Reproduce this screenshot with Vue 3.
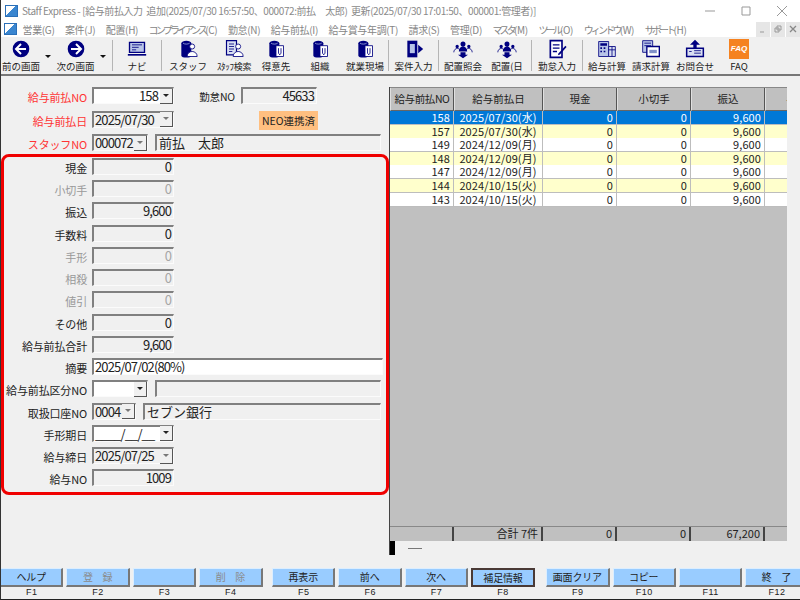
<script setup>
const NAVY = '#000080'
const cyl = { d: 'M4 5c0-4 12-4 12 0v15c0 3-12 3-12 0z', fill: NAVY }
const cylTop = { d: 'M6 5c2 1.5 6 1.5 8 0', stroke: '#9aa6d8' }
const bookPage = { d: 'M12 8h9v13h-9z', fill: '#fff', stroke: NAVY }
const bookLine = { d: 'M15 11v6M18 11v6M15 17l1.5 2 1.5-2', stroke: NAVY }
const person = [
  { d: 'M14 9a3 3 0 1 1 6 0a3 3 0 1 1-6 0z', fill: '#fff', stroke: NAVY },
  { d: 'M11 21c0-8 12-8 12 0z', fill: '#fff', stroke: NAVY }
]
const group = [
  { d: 'M9 6a3 3 0 1 1 6 0a3 3 0 1 1-6 0zM7 15c0-8 10-8 10 0z', fill: NAVY },
  { d: 'M3 9a2 2 0 1 1 4 0a2 2 0 1 1-4 0zM17 9a2 2 0 1 1 4 0a2 2 0 1 1-4 0z', fill: NAVY },
  { d: 'M1 16c0-5 6-6 7-3M23 16c0-5-6-6-7-3', stroke: NAVY },
  { d: 'M9 16h6v3h3l-6 4-6-4h3z', fill: NAVY }
]

const icons = {
  back: [
    { d: 'M2 12a10 10 0 1 1 20 0a10 10 0 1 1-20 0z', fill: NAVY },
    { d: 'M12 6l-6 6 6 6M6 12h12', stroke: '#fff', width: 2.4 }
  ],
  forward: [
    { d: 'M2 12a10 10 0 1 1 20 0a10 10 0 1 1-20 0z', fill: NAVY },
    { d: 'M12 6l6 6-6 6M18 12H6', stroke: '#fff', width: 2.4 }
  ],
  navi: [
    { d: 'M3 4h18v12H3z', fill: '#b8c4e8', stroke: NAVY, width: 1.6 },
    { d: 'M6 7h12M6 10h8M6 13h5', stroke: NAVY },
    { d: 'M1 18h22v2H1z', fill: NAVY }
  ],
  staff: [cyl, cylTop, ...person],
  staffSearch: [
    { d: 'M3 2h12v17H3z', fill: '#d8def2', stroke: NAVY, width: 1.4 },
    { d: 'M6 6h6M6 9h6M6 12h6M6 15h4', stroke: NAVY },
    ...person
  ],
  book: [cyl, cylTop, bookPage, bookLine],
  entry: [
    { d: 'M4 2h12v20H4z', fill: NAVY },
    { d: 'M7 6h6v11H7z', fill: '#b8c4e8' },
    { d: 'M23 12l-6-5v10z', fill: NAVY }
  ],
  assign: group,
  attendance: [
    { d: 'M4 2h14v20H4z', fill: '#fff', stroke: NAVY, width: 2 },
    { d: 'M7 7h8M7 11h8M7 15h5', stroke: NAVY, width: 1.6 },
    { d: 'M14 17l8-9 1.5 1.5-8 9-2.5 1z', fill: NAVY }
  ],
  salary: [
    { d: 'M2 3h12v18H2z', fill: '#b8c4e8', stroke: NAVY },
    { d: 'M4 5h8v3H4zM4 10h2v2H4zM8 10h2v2H8zM4 14h2v2H4zM8 14h2v2H8z', fill: NAVY },
    { d: 'M14 9h8v12h-8z', fill: '#d8def2', stroke: NAVY },
    { d: 'M14 13h8M18 9v12', stroke: NAVY }
  ],
  billing: [
    { d: 'M2 2h12v14H2z', fill: '#b8c4e8', stroke: NAVY },
    { d: 'M4 5h8M4 8h8', stroke: NAVY },
    { d: 'M7 9h15v12H7z', fill: '#fff', stroke: NAVY, width: 1.6 },
    { d: 'M10 13h9v4h-9z', fill: '#8090c8' }
  ],
  contact: [
    { d: 'M12 1l6 6h-4v4h-4V7H6z', fill: NAVY },
    { d: 'M2 11h20v10H2z', fill: '#d8def2', stroke: NAVY, width: 1.8 },
    { d: 'M5 15h3M11 14h8M11 17h8', stroke: NAVY }
  ]
}

// 区切り線は sep、ドロップダウン付きは drop
const tools = [
  { label: '前の画面', icon: 'back', w: 54, drop: true },
  { label: '次の画面', icon: 'forward', w: 55, drop: true },
  { sep: true },
  { label: 'ナビ', icon: 'navi', w: 44 },
  { sep: true },
  { label: 'スタッフ', icon: 'staff', w: 48 },
  { label: 'ｽﾀｯﾌ検索', icon: 'staffSearch', w: 44, small: true },
  { label: '得意先', icon: 'book', w: 40 },
  { label: '組織', icon: 'book', w: 48 },
  { label: '就業現場', icon: 'book', w: 42 },
  { sep: true },
  { label: '案件入力', icon: 'entry', w: 45 },
  { sep: true },
  { label: '配置照会', icon: 'assign', w: 44 },
  { label: '配置(日', icon: 'assign', w: 44 },
  { sep: true },
  { label: '勤怠入力', icon: 'attendance', w: 46 },
  { sep: true },
  { label: '給与計算', icon: 'salary', w: 44 },
  { label: '請求計算', icon: 'billing', w: 44 },
  { label: 'お問合せ', icon: 'contact', w: 44 },
  { label: 'FAQ', faq: true, w: 44 }
]

const menus = [
  { label: '営業', key: '(G)' },
  { label: '案件', key: '(J)' },
  { label: '配置', key: '(H)' },
  { label: 'コンプライアンス', key: '(C)', kana: true },
  { label: '勤怠', key: '(N)' },
  { label: '給与前払', key: '(I)' },
  { label: '給与賞与年調', key: '(T)' },
  { label: '請求', key: '(S)' },
  { label: '管理', key: '(D)' },
  { label: 'マスタ', key: '(M)', kana: true },
  { label: 'ツール', key: '(O)', kana: true },
  { label: 'ウィンドウ', key: '(W)', kana: true },
  { label: 'サポート', key: '(H)', kana: true }
]

const amounts = [
  { label: '現金', value: '0' },
  { label: '小切手', value: '0', off: true },
  { label: '振込', value: '9,600' },
  { label: '手数料', value: '0' },
  { label: '手形', value: '0', off: true },
  { label: '相殺', value: '0', off: true },
  { label: '値引', value: '0', off: true },
  { label: 'その他', value: '0' },
  { label: '給与前払合計', value: '9,600' }
]

const rows = [
  ['158', '2025/07/30(水)'],
  ['157', '2025/07/30(水)'],
  ['149', '2024/12/09(月)'],
  ['148', '2024/12/09(月)'],
  ['147', '2024/12/09(月)'],
  ['144', '2024/10/15(火)'],
  ['143', '2024/10/15(火)']
]

const fkeys = [
  { key: 'F1', label: 'ヘルプ' },
  { key: 'F2', label: '登　録', off: true },
  { key: 'F3', label: '' },
  { key: 'F4', label: '削　除', off: true },
  { key: 'F5', label: '再表示', gap: 'gap-a' },
  { key: 'F6', label: '前へ' },
  { key: 'F7', label: '次へ' },
  { key: 'F8', label: '補足情報', focus: true },
  { key: 'F9', label: '画面クリア', gap: 'gap-b' },
  { key: 'F10', label: 'コピー' },
  { key: 'F11', label: '' },
  { key: 'F12', label: '終　了' }
]
</script>

<template>
  <div class="window">
    <!-- TITLE BAR -->
    <div class="titlebar">
      <span class="app-icon" />
      <span class="title-text">Staff Express - [給与前払入力&nbsp; 追加(2025/07/30 16:57:50、000072:前払　太郎)&nbsp; 更新(2025/07/30 17:01:50、000001:管理者)]</span>
      <div class="win-controls">
        <svg width="12" height="12" viewBox="0 0 12 12"><path d="M1 6h10" stroke="#999" /></svg>
        <svg width="12" height="12" viewBox="0 0 12 12"><path d="M2 2h8v8H2z" fill="none" stroke="#999" /></svg>
        <svg width="12" height="12" viewBox="0 0 12 12"><path d="M1 1l10 10M11 1L1 11" stroke="#999" /></svg>
      </div>
    </div>

    <!-- MENU -->
    <div class="menubar">
      <span class="app-icon menu-icon" />
      <span v-for="m in menus" :key="m.label + m.key" class="menu-item"><span :class="{ kana: m.kana }">{{ m.label }}</span>{{ m.key }}</span>
      <div class="mdi-controls">
        <span><svg width="8" height="8" viewBox="0 0 8 8"><path d="M1 7h4" stroke="#999" /></svg></span>
        <span><svg width="8" height="8" viewBox="0 0 8 8"><path d="M3 1h4v4H3zM1 3h4v4H1z" fill="none" stroke="#999" /></svg></span>
        <span><svg width="8" height="8" viewBox="0 0 8 8"><path d="M1 1l6 6M7 1L1 7" stroke="#888" stroke-width="1.3" /></svg></span>
      </div>
    </div>

    <!-- TOOLBAR -->
    <div class="toolbar">
      <template v-for="(t, i) in tools" :key="i">
        <div v-if="t.sep" class="tool-sep" />
        <div v-else class="tool" :class="{ 'has-drop': t.drop }" :style="{ width: t.w + 'px' }">
          <div v-if="t.faq" class="faq-icon">FAQ</div>
          <svg v-else width="20" height="20" viewBox="0 0 24 24">
            <path
              v-for="(p, j) in icons[t.icon]"
              :key="j"
              :d="p.d"
              :fill="p.fill || 'none'"
              :stroke="p.stroke || 'none'"
              :stroke-width="p.width || 1"
            />
          </svg>
          <span class="tool-label" :class="{ small: t.small }">{{ t.label }}</span>
          <span v-if="t.drop" class="tool-drop" />
        </div>
      </template>
    </div>

    <div class="main">
      <!-- FORM -->
      <div class="form">
        <div class="row top">
          <label class="req">給与前払NO</label>
          <div class="combo white w82"><span class="val right">158</span><b class="arrow" /></div>
          <label class="side">勤怠NO</label>
          <div class="field w76"><span class="val right">45633</span></div>
        </div>
        <div class="row top">
          <label class="req">給与前払日</label>
          <div class="combo flat w82"><span class="val">2025/07/30</span><b class="arrow" /></div>
          <div class="neo">NEO連携済</div>
        </div>
        <div class="row top">
          <label class="req">スタッフNO</label>
          <div class="combo flat w56"><span class="val">000072</span><b class="arrow" /></div>
          <div class="field name w226"><span class="val big">前払　太郎</span></div>
        </div>

        <div v-for="a in amounts" :key="a.label" class="row">
          <label :class="{ off: a.off }">{{ a.label }}</label>
          <div class="field w82" :class="{ off: a.off }"><span class="val right">{{ a.value }}</span></div>
        </div>

        <div class="row">
          <label>摘要</label>
          <div class="field white w291"><span class="val">2025/07/02(80%)</span></div>
        </div>
        <div class="row">
          <label>給与前払区分NO</label>
          <div class="combo white w56"><span class="val" /><b class="arrow" /></div>
          <div class="field name w226" />
        </div>
        <div class="row">
          <label>取扱口座NO</label>
          <div class="combo flat w44"><span class="val">0004</span><b class="arrow" /></div>
          <div class="field name w238"><span class="val big">セブン銀行</span></div>
        </div>
        <div class="row">
          <label>手形期日</label>
          <div class="combo white w82"><span class="val">____/__/__</span><b class="arrow" /></div>
        </div>
        <div class="row">
          <label>給与締日</label>
          <div class="combo flat w82"><span class="val">2025/07/25</span><b class="arrow" /></div>
        </div>
        <div class="row">
          <label>給与NO</label>
          <div class="field w82"><span class="val right">1009</span></div>
        </div>

        <!-- 注釈の赤枠 -->
        <div class="callout" />
      </div>

      <!-- LIST -->
      <div class="list">
        <div class="grid-wrap">
          <div class="grid-row head">
            <span>給与前払NO</span><span>給与前払日</span><span>現金</span><span>小切手</span><span>振込</span><span>手数料</span>
          </div>
          <div
            v-for="(r, i) in rows"
            :key="r[0]"
            class="grid-row body"
            :class="{ selected: i === 0, odd: i % 2 === 1 }"
          >
            <span class="num">{{ r[0] }}</span><span class="date">{{ r[1] }}</span>
            <span class="num">0</span><span class="num">0</span><span class="num">9,600</span><span />
          </div>
          <div class="grid-empty" />
          <div class="grid-row foot">
            <span /><span class="num">合計 7件</span><span class="num">0</span><span class="num">0</span><span class="num">67,200</span><span />
          </div>
          <div class="grid-status"><i class="black" /><i class="dash" /></div>
        </div>
      </div>
    </div>

    <!-- FUNCTION KEYS -->
    <div class="fkeys">
      <div v-for="f in fkeys" :key="f.key" class="fkey" :class="f.gap">
        <div class="fbtn" :class="{ off: f.off, focus: f.focus }">{{ f.label }}</div>
        <span class="fname">{{ f.key }}</span>
      </div>
    </div>
  </div>
</template>

<style>
html, body { margin: 0; background: #fff; }
</style>

<style scoped>
.window {
  width: 800px;
  height: 600px;
  box-sizing: border-box;
  display: flex;
  flex-direction: column;
  position: relative;
  overflow: hidden;
  background: #f0f0f0;
  border-left: 1px solid #333;
  border-bottom: 1px solid #222;
  font-family: "Noto Sans CJK JP", "Liberation Sans", sans-serif;
  font-size: 11px;
  color: #222;
}

/* Title */
.titlebar {
  height: 21px;
  display: flex;
  align-items: center;
  padding-left: 4px;
  background: #fff;
  color: #8a8a8a;
  font-size: 10px;
  white-space: nowrap;
  flex: none;
}
.title-text { margin-left: 4px; letter-spacing: -0.42px; }
.win-controls {
  margin-left: auto;
  display: flex;
  gap: 24px;
  padding-right: 12px;
}
.app-icon {
  width: 13px;
  height: 12px;
  box-sizing: border-box;
  border: 1px solid #2a6fb8;
  background: linear-gradient(135deg, #fff 45%, #3a86d0 46%);
  display: block;
  flex: none;
}
.menu-icon { margin-right: -5px; }

/* Menu */
.menubar {
  height: 16px;
  display: flex;
  align-items: center;
  padding-left: 3px;
  background: #fff;
  color: #858585;
  font-size: 10px;
  white-space: nowrap;
  flex: none;
}
.menu-item { margin-left: 10.5px; letter-spacing: -0.35px; }
.kana { letter-spacing: -2.8px; }
.mdi-controls {
  margin-left: auto;
  display: flex;
  gap: 1px;
}
.mdi-controls span {
  width: 14px;
  height: 15px;
  background: #e6e6e6;
  display: flex;
  align-items: center;
  justify-content: center;
}

/* Toolbar */
.toolbar {
  height: 37px;
  display: flex;
  align-items: stretch;
  border-bottom: 2px solid #777;
  background: #f0f0f0;
  flex: none;
}
.tool {
  position: relative;
  box-sizing: border-box;
  display: flex;
  flex-direction: column;
  align-items: center;
  padding-top: 2px;
  color: #222;
  flex: none;
}
.tool.has-drop { padding-right: 14px; }
.tool-label {
  font-size: 9.5px;
  line-height: 13px;
  white-space: nowrap;
  margin-top: 1px;
}
.tool-label.small { font-size: 9px; letter-spacing: -0.3px; }
.tool-sep {
  width: 1px;
  margin: 3px 2px;
  background: #b5b5b5;
  flex: none;
}
.tool-drop {
  position: absolute;
  top: 18px;
  right: 4px;
  border: 3px solid transparent;
  border-top: 3px solid #111;
  border-bottom: 0;
}
.faq-icon {
  width: 20px;
  height: 20px;
  background: #f58220;
  color: #fff;
  font: italic bold 8px/20px "Liberation Sans", sans-serif;
  text-align: center;
}

/* Layout */
.main {
  flex: 1;
  display: flex;
  min-height: 0;
}
.form {
  position: relative;
  width: 387px;
  flex: none;
  padding-top: 11px;
  box-sizing: border-box;
}
.row {
  height: 22.25px;
  display: flex;
  align-items: flex-start;
}
.row.top { height: 23.6px; }
.row label {
  width: 86px;
  margin-right: 5px;
  flex: none;
  text-align: right;
  font-size: 11px;
  line-height: 20px;
  white-space: nowrap;
  letter-spacing: -0.15px;
}
.row label.req { color: #ff3333; }
.row label.off { color: #999; }
.row label.side { width: 61px; margin-right: 6px; font-size: 10.5px; }

/* Inputs */
.field, .combo {
  height: 17px;
  box-sizing: border-box;
  display: flex;
  align-items: center;
  border-top: 2px solid #808080;
  border-left: 2px solid #808080;
  border-right: 1px solid #fbfbfb;
  border-bottom: 1px solid #fbfbfb;
  background: #f0f0f0;
  flex: none;
}
.white { background: #fff; }
.val {
  flex: 1;
  min-width: 0;
  padding: 0 1px;
  font-size: 13px;
  line-height: 14px;
  white-space: nowrap;
  letter-spacing: -0.9px;
}
.val.right { text-align: right; padding-right: 2px; }
.val.big { font-size: 13px; letter-spacing: 0; padding-left: 2px; }
.field.off .val { color: #a6a6a6; }
.arrow {
  width: 13px;
  height: 15px;
  box-sizing: border-box;
  flex: none;
  position: relative;
  background: #f0f0f0;
  border-right: 1px solid #555;
  border-bottom: 1px solid #555;
}
.arrow::after {
  content: "";
  position: absolute;
  left: 3px;
  top: 5px;
  border: 3px solid transparent;
  border-top: 3px solid #222;
  border-bottom: 0;
}
.combo.flat .arrow::after { border-top-color: #777; }
.w44 { width: 44px; }
.w56 { width: 56px; }
.w76 { width: 76px; }
.w82 { width: 82px; }
.w226 { width: 226px; }
.w238 { width: 238px; }
.w291 { width: 291px; }
.name { margin-left: 7px; }
.neo {
  width: 59px;
  height: 19px;
  margin-left: 85px;
  background: #ffbf80;
  font-size: 10.5px;
  line-height: 19px;
  text-align: center;
  white-space: nowrap;
}

/* Annotation */
.callout {
  position: absolute;
  left: 0;
  top: 78px;
  width: 388px;
  height: 341px;
  box-sizing: border-box;
  border: 3px solid #f00000;
  border-radius: 8px;
  pointer-events: none;
}

/* List */
.list {
  flex: 1;
  padding: 11px 12px 0 1px;
  display: flex;
  min-width: 0;
}
.grid-wrap {
  width: 398px;
  height: 468px;
  display: flex;
  flex-direction: column;
  background: #c0c0c0;
  border-left: 1px solid #444;
  box-sizing: border-box;
  overflow: hidden;
}
.grid-row {
  display: grid;
  grid-template-columns: 64px 89px 74px 74px 74px 74px;
  flex: none;
}
.grid-row span {
  box-sizing: border-box;
  white-space: nowrap;
}
.head {
  height: 23px;
  background: #c0c0c0;
  border-top: 1px solid #888;
}
.head span {
  text-align: center;
  font-size: 10.5px;
  line-height: 21px;
  border-right: 1px solid #555;
  border-bottom: 1px solid #666;
  border-left: 1px solid #e0e0e0;
}
.head span:first-child { letter-spacing: -0.4px; }
.body {
  height: 13.6px;
  background: #fff;
  font-size: 11px;
  line-height: 13px;
}
.body.odd { background: #ffffcc; }
.body.selected { background: #0078d7; color: #fff; }
.body span {
  border-right: 1px solid #bdbdbd;
  border-bottom: 1px solid #bdbdbd;
  letter-spacing: 0.1px;
}
.num { text-align: right; padding-right: 3px; }
.date { text-align: center; }
.grid-empty { flex: 1; }
.foot {
  height: 14px;
  border-top: 1px solid #888;
  font-size: 11px;
  line-height: 13px;
}
.foot span { border-right: 2px solid #444; }
.foot span:last-child { border: 0; }
.grid-status {
  height: 14px;
  flex: none;
  background: #f0f0f0;
  display: flex;
  align-items: center;
}
.black { width: 5px; height: 14px; background: #000; display: block; }
.dash { width: 14px; height: 1px; background: #777; margin-left: 13px; display: block; }

/* Function keys */
.fkeys {
  height: 31px;
  flex: none;
  display: flex;
  gap: 3px;
  margin-left: -1px;
}
.fkey {
  width: 63.4px;
  display: flex;
  flex-direction: column;
  align-items: center;
  flex: none;
}
.fkey.gap-a { margin-left: 6.5px; }
.fkey.gap-b { margin-left: 8.5px; }
.fbtn {
  width: 100%;
  height: 19px;
  box-sizing: border-box;
  background: #99ccff;
  border-top: 1px solid #dceeff;
  border-left: 1px solid #dceeff;
  border-right: 2px solid #777;
  border-bottom: 2px solid #777;
  font-size: 10px;
  line-height: 16px;
  letter-spacing: -0.2px;
  text-align: center;
  white-space: nowrap;
}
.fbtn.off { color: #8a8a8a; }
.fbtn.focus { border: 2px solid #4a3a36; line-height: 15px; }
.fname {
  font-family: "Liberation Sans", sans-serif;
  font-size: 9px;
  line-height: 11px;
  letter-spacing: 0.5px;
}
</style>
